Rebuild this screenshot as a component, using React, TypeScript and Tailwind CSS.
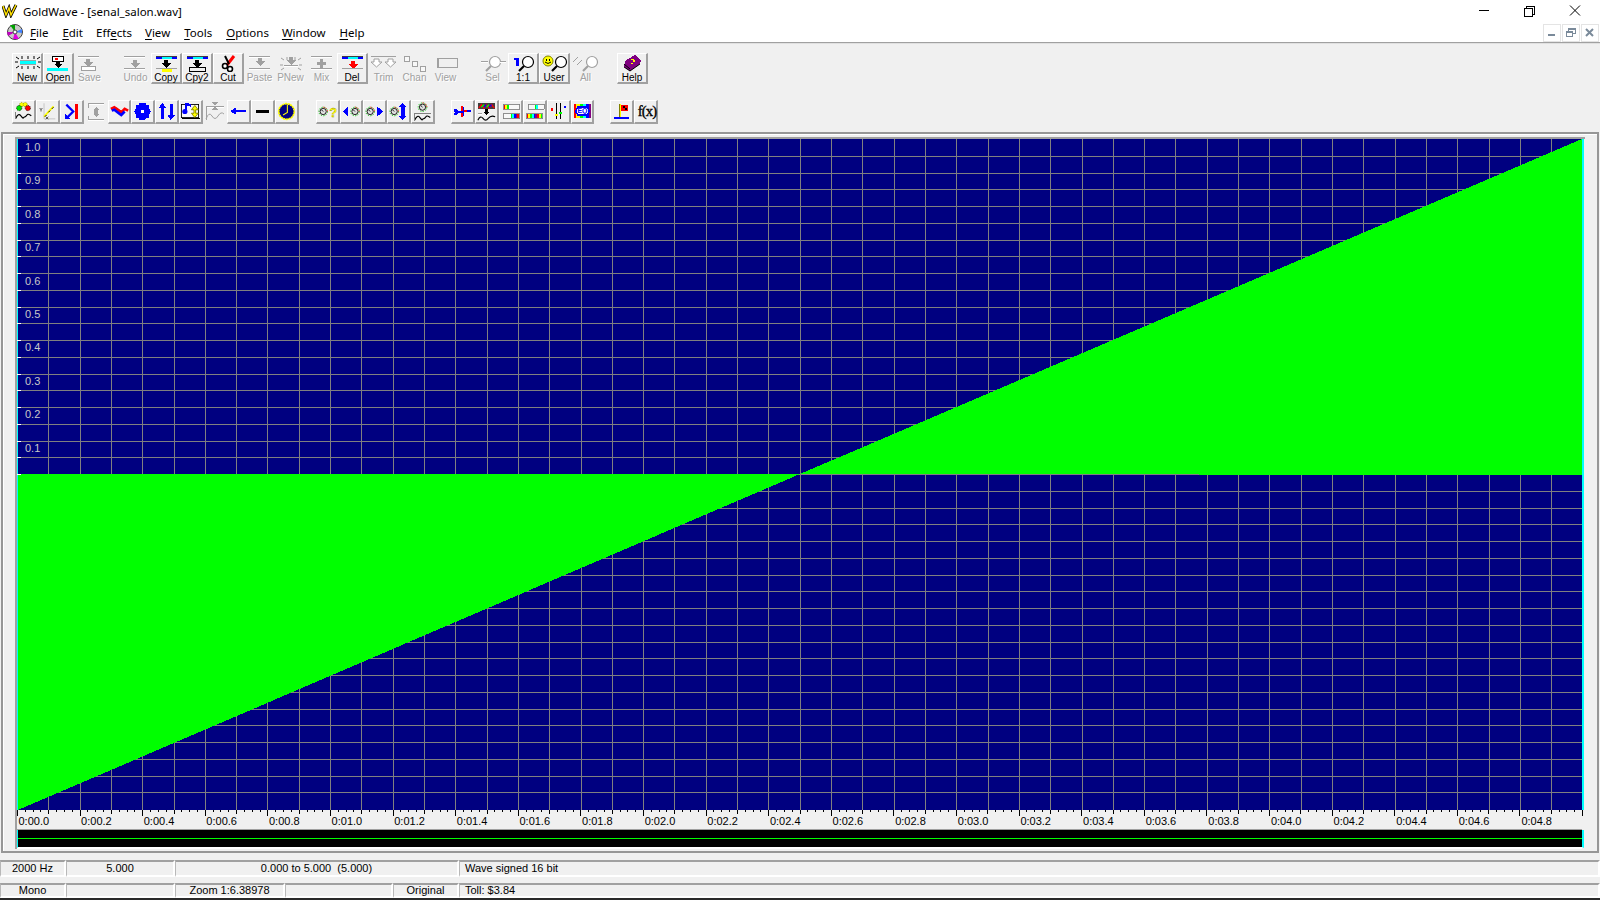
import React from "react";

const R = ({ x, y, w, h, f }: { x: number; y: number; w: number; h: number; f: string }) => (
  <rect x={x} y={y} width={w} height={h} fill={f} shapeRendering="crispEdges" />
);
const P = ({ d, f }: { d: string; f: string }) => <path d={d} fill={f} shapeRendering="crispEdges" />;
const L = ({ d, s = "#000", w = 1 }: { d: string; s?: string; w?: number }) => (
  <path d={d} fill="none" stroke={s} strokeWidth={w} />
);
const G = "#a0a0a0";
const W = "#ffffff";

const GLine = ({ x, y, w }: { x: number; y: number; w: number }) => (
  <>
    <R x={x} y={y} w={w} h={1} f={G} />
    <R x={x} y={y + 1} w={w} h={1} f={W} />
  </>
);
const Mag = ({ x, y, c = "#000" }: { x: number; y: number; c?: string }) => (
  <>
    <circle cx={x + 8} cy={y + 6} r={5.5} fill="#fff" stroke={c} strokeWidth={1.2} />
    <L d={`M${x + 4} ${y + 10} L${x - 1} ${y + 15}`} s={c} w={2.2} />
  </>
);
const ArrowDown = ({ x, y, c = "#000" }: { x: number; y: number; c?: string }) => (
  <P d={`M${x + 2} ${y}h4v3h3l-5 5l-5-5h3z`} f={c} />
);
const TopBar = ({ x = 4 }: { x?: number }) => (
  <>
    <R x={x} y={3} w={21} h={2} f="#0000ff" />
    <R x={x + 6} y={3} w={10} h={2} f="#00ffff" />
    <R x={x} y={2} w={21} h={1} f="#404040" />
  </>
);

const big: Record<string, React.ReactNode> = {
  New: (
    <>
      <L d="M3 3l3 2M9 2v3M15 2v3M21 2v3M27 3l-3 2M2 8h3M25 8h3M3 14l3-2M9 12v3M15 12v3M21 12v3M27 14l-3-2" />
      <R x={7} y={6} w={16} h={1} f={G} />
      <R x={7} y={7} w={16} h={3} f="#00ffff" />
      <R x={7} y={10} w={16} h={1} f={G} />
    </>
  ),
  Open: (
    <>
      <R x={8} y={2} w={12} h={6} f="#000" />
      <R x={9} y={3} w={10} h={4} f="#fff" />
      <R x={11} y={4} w={3} h={2} f="#ff0000" />
      <P d="M12 8h4v2h2l-4 4l-4-4h2z" f="#000" />
      <R x={3} y={14} w={21} h={3} f="#00ffff" />
    </>
  ),
  Save: (
    <>
      <GLine x={3} y={2} w={21} />
      <ArrowDown x={9} y={5} c={G} />
      <R x={6} y={12} w={15} h={5} f="#fff" />
      <path d="M6.5 12.5h14v4h-14z" fill="none" stroke={G} shapeRendering="crispEdges" />
    </>
  ),
  Undo: (
    <>
      <GLine x={3} y={2} w={21} />
      <ArrowDown x={10} y={6} c={G} />
      <GLine x={3} y={14} w={21} />
    </>
  ),
  Copy: (
    <>
      <TopBar />
      <ArrowDown x={10} y={6} />
      <R x={4} y={14} w={21} h={1} f={G} />
      <R x={10} y={15} w={10} h={3} f="#ffff00" />
    </>
  ),
  Cpy2: (
    <>
      <TopBar />
      <ArrowDown x={10} y={6} />
      <R x={6} y={13} w={17} h={5} f="#000" />
      <R x={7} y={14} w={15} h={3} f="#f0f0f0" />
    </>
  ),
  Cut: (
    <>
      <L d="M20 2L13 11" s="#ff0000" w={3} />
      <L d="M11 2L15 10" s="#000" w={2} />
      <circle cx={11} cy={12} r={2.5} fill="#fff" stroke="#000" strokeWidth={1.6} />
      <circle cx={16} cy={15} r={2.5} fill="#fff" stroke="#000" strokeWidth={1.6} />
    </>
  ),
  Paste: (
    <>
      <GLine x={4} y={2} w={21} />
      <ArrowDown x={11} y={4} c={G} />
      <GLine x={4} y={14} w={21} />
    </>
  ),
  PNew: (
    <>
      <L d="M5 4l3 2M11 3v3M19 3v3M25 4l-3 2M4 11h3M23 11h3M5 16l3-2M25 16l-3-2" s={G} />
      <ArrowDown x={11} y={3} c={G} />
      <GLine x={8} y={11} w={14} />
    </>
  ),
  Mix: (
    <>
      <GLine x={4} y={2} w={21} />
      <P d="M13 5h3v3h3v3h-3v3h-3v-3h-3v-3h3z" f={G} />
      <GLine x={4} y={14} w={21} />
    </>
  ),
  Del: (
    <>
      <TopBar />
      <P d="M13 7h4v3h3l-5 5l-5-5h3z" f="#ff0000" />
      <R x={4} y={14} w={21} h={1} f={G} />
    </>
  ),
  Trim: (
    <>
      <R x={2} y={2} w={25} h={1} f={G} />
      <path d="M5 5h5v3h3l-5.5 5L2 8h3zM19 5h5v3h3l-5.5 5L16 8h3z" fill="#fff" stroke={G} />
    </>
  ),
  Chan: (
    <>
      <path d="M4.5 2.5h5v5h-5zM12.5 7.5h5v5h-5zM20.5 12.5h5v5h-5z" fill="#f8f8f8" stroke={G} shapeRendering="crispEdges" />
    </>
  ),
  View: (
    <>
      <path d="M6.5 4.5h20v9h-20z" fill="#f0f0f0" stroke={G} shapeRendering="crispEdges" />
      <R x={6} y={4} w={2} h={10} f={G} />
    </>
  ),
  Sel: (
    <>
      <Mag x={9} y={2} c={G} />
      <GLine x={3} y={7} w={7} />
      <GLine x={22} y={7} w={6} />
    </>
  ),
  "1:1": (
    <>
      <R x={7} y={4} w={3} h={8} f="#0000ff" />
      <R x={5} y={4} w={3} h={2} f="#0000ff" />
      <Mag x={11} y={2} />
    </>
  ),
  User: (
    <>
      <circle cx={8} cy={7} r={5} fill="#ffff00" stroke="#808000" />
      <R x={6} y={5} w={1} h={2} f="#000" />
      <R x={9} y={5} w={1} h={2} f="#000" />
      <L d="M5 8q3 3 6 0" />
      <Mag x={13} y={2} />
    </>
  ),
  All: (
    <>
      <L d="M2 8l5-5M6 11l5-5" s={G} />
      <Mag x={13} y={2} c={G} />
    </>
  ),
  Help: (
    <>
      <P d="M7 7L17 1l6 5l-1 4l-10 7l-6-4z" f="#800080" />
      <L d="M6 13l6 4l10-7M6 10l6 5" s="#000" />
      <R x={13} y={5} w={3} h={1} f="#ffff00" />
      <R x={15} y={6} w={2} h={2} f="#ffff00" />
      <R x={13} y={9} w={2} h={1} f="#ffff00" />
    </>
  ),
};

const Knob = ({ x, y }: { x: number; y: number }) => (
  <>
    <circle cx={x + 5} cy={y + 5} r={5} fill="none" stroke="#00c000" strokeWidth={1} strokeDasharray="1.5 1.5" />
    <path d={`M${x + 5} ${y} a5 5 0 0 1 5 5`} fill="none" stroke="#ff0000" strokeDasharray="1.5 1.5" />
    <circle cx={x + 5} cy={y + 5} r={3.6} fill="#e0e0e0" stroke="#000" />
    <L d={`M${x + 5} ${y + 5}l-2-2`} />
  </>
);
const SmallWave = ({ y = 14 }: { y?: number }) => (
  <>
    <R x={1} y={y - 3} w={20} h={1} f="#808080" />
    <L d={`M2 ${y + 5}q3-7 6-3t3 2q3-1 4-3t5 1`} w={1.3} />
    <R x={1} y={y - 3} w={1} h={9} f="#808080" />
  </>
);
const rainbow = ["#ff0000", "#ffff00", "#00ff00", "#00ffff", "#0000ff", "#800080"];
const Bars = ({ x, y, h, n, from = 0 }: { x: number; y: number; h: number; n: number; from?: number }) => (
  <>
    {Array.from({ length: n }, (_, i) => (
      <R key={i} x={x + i * 2} y={y} w={2} h={h} f={rainbow[(i + from) % 6]} />
    ))}
  </>
);

const small: React.ReactNode[] = [
  <>
    <circle cx={9} cy={3} r={2.5} fill="#ffff00" stroke="#808000" strokeDasharray="1 1" />
    <circle cx={13} cy={3} r={2.5} fill="#ffff00" stroke="#808000" strokeDasharray="1 1" />
    <circle cx={6} cy={7} r={3} fill="#00e000" stroke="#000" strokeDasharray="1 1" />
    <circle cx={16} cy={7} r={3} fill="#ff0000" stroke="#000" strokeDasharray="1 1" />
    <SmallWave />
  </>,
  <>
    <L d="M7 1.5v18M7 19.5h13" s="#c0c0c0" />
    <L d="M7 17L18 5" s="#ffff00" w={2} />
    <L d="M8 17l2-2M12 12l2-2M16 8l2-2" />
    <L d="M2 7l1.5 2L5 7M3.5 9v2M9 17l3 3M12 17l-3 3" s="#404040" />
  </>,
  <>
    <R x={15} y={2} w={3} h={18} f="#ff0000" />
    <L d="M5 3l8 8l-8 8" s="#0000ff" w={2.6} />
    <P d="M3 13v7h7z" f="#0000ff" />
  </>,
  <>
    <GLine x={3} y={2} w={16} />
    <R x={3} y={2} w={1} h={5} f={G} />
    <P d="M11 6l3 3h-6zM11 16l3-3h-6z" f={G} />
    <R x={9} y={9} w={4} h={4} f={G} />
    <GLine x={3} y={18} w={16} />
    <R x={3} y={15} w={1} h={4} f={G} />
  </>,
  <>
    <L d="M1 8l4-2l4 3l4 3l4-4l4 2" s="#ff0000" w={3} />
    <L d="M2 10l3-1l4 3l4 3l4-4" s="#0000ff" w={3} />
    <L d="M7 7l4 3l3 1" s="#ff0000" w={2} />
  </>,
  <>
    <P d="M8 1h6l2 3h3l-1 3l3 4l-3 4l1 3h-3l-2 3H8l-2-3H3l1-3l-3-4l3-4l-1-3h3z" f="#0000ff" />
    <R x={9} y={9} w={4} h={4} f="#fff" />
  </>,
  <>
    <P d="M6 1l5 6H8v13H5V7H2z" f="#0000ff" />
    <P d="M16 21l5-6h-3V2h-3v13h-3z" f="#0000ff" />
  </>,
  <>
    <path d="M.5 2.5h20v16H.5z" fill="#f8f8f8" stroke="#000" shapeRendering="crispEdges" />
    <R x={1} y={18} w={21} h={2} f="#000" />
    <P d="M5 1h2v10h-2z" f="#0000ff" />
    <P d="M7 1l5 2v3l-5-2z" f="#0000ff" />
    <circle cx={4.5} cy={11} r={3} fill="#0000ff" />
    <P d="M16 4l4 5h-3v4h3l-4 5l-4-5h3V9h-3z" f="#ffff00" />
    <L d="M16 4l4 5h-3v4h3l-4 5l-4-5h3V9h-3z" s="#808000" />
  </>,
  <>
    <GLine x={2} y={5} w={18} />
    <P d="M8 1h6l-3 4zM8 9h6l-3-4z" f={G} />
    <L d="M2 18q3-8 6-3t6 0t6-2" s={G} />
    <R x={2} y={6} w={1} h={13} f={G} />
  </>,
  <>
    <R x={6} y={9} w={14} h={3} f="#0000ff" />
    <P d="M1 10.5l7-4v8z" f="#0000ff" />
  </>,
  <R x={3} y={9} w={16} h={4} f="#000" />,
  <>
    <circle cx={11} cy={11} r={9} fill="#000080" stroke="#ffff00" strokeWidth={2} strokeDasharray="2.5 .6" />
    <L d="M12 3v9l-5 3" s="#ffff00" w={1.2} />
  </>,
  <>
    <Knob x={1} y={6} />
    <text x={13} y={17} fontSize={15} fontWeight={700} fill="#ffff00" stroke="#808000" strokeWidth={0.3} fontFamily="Liberation Sans, sans-serif">?</text>
  </>,
  <>
    <P d="M1 11l6-5.5v11z" f="#0000ff" />
    <Knob x={10} y={6} />
  </>,
  <>
    <Knob x={1} y={6} />
    <P d="M14 5l7 6l-7 6z" f="#0000ff" />
  </>,
  <>
    <Knob x={1} y={6} />
    <P d="M16 1l5 5h-3v10h3l-5 5l-5-5h3V6h-3z" f="#0000ff" />
  </>,
  <>
    <Knob x={6} y={1} />
    <SmallWave y={16} />
  </>,
  <>
    <P d="M1 8h3l2 2h3V5h3l1 4h8v3h-8l-1 5H9v-4H6l-2 2H1l1-3z" f="#0000ff" />
    <P d="M9 5h3v5H9zM9 13h3v4H9z" f="#ff0000" />
    <R x={13} y={9} w={3} h={3} f="#ff0000" />
  </>,
  <>
    <R x={1} y={1} w={20} h={7} f="#404040" />
    <L d="M2 7l3-4l3 4l3-4l3 4l3-4l3 4" s="#ff0000" w={1.5} />
    <L d="M5 6l3-3M11 6l3-3" s="#00ff00" w={1.5} />
    <L d="M8 6l3-3M14 6l3-3" s="#0000ff" w={1.5} />
    <P d="M9 8h4v3h2l-4 4l-4-4h2z" f="#000" />
    <GLine x={1} y={13} w={5} />
    <L d="M1 21q3-6 6-2t6 0t8-2" w={1.3} />
  </>,
  <>
    <path d="M2.5 2.5h19v6h-19z" fill="#f8f8f8" stroke="#808080" shapeRendering="crispEdges" />
    <Bars x={3} y={3} h={5} n={3} />
    <path d="M2.5 13.5h19v6h-19z" fill="#f8f8f8" stroke="#808080" shapeRendering="crispEdges" />
    <Bars x={11} y={14} h={5} n={5} from={2} />
  </>,
  <>
    <path d="M3.5 2.5h19v6h-19z" fill="#f8f8f8" stroke="#808080" shapeRendering="crispEdges" />
    <Bars x={11} y={3} h={5} n={2} from={2} />
    <path d="M1.5 13.5h19v6h-19z" fill="#f8f8f8" stroke="#808080" shapeRendering="crispEdges" />
    <Bars x={2} y={14} h={5} n={9} />
  </>,
  <>
    <R x={3} y={1} w={1} h={19} f="#000" />
    <R x={8} y={1} w={1} h={19} f="#000" />
    <R x={13} y={1} w={1} h={19} f="#000" />
    <R x={18} y={1} w={1} h={19} f="#000" />
    <R x={2} y={7} w={3} h={3} f="#ff0000" />
    <R x={7} y={14} w={3} h={2} f="#ffff00" />
    <R x={12} y={11} w={3} h={3} f="#00ff00" />
    <R x={17} y={5} w={3} h={2} f="#0000ff" />
  </>,
  <>
    <R x={1} y={2} w={3} h={17} f="#ff0000" />
    <R x={4} y={2} w={4} h={17} f="#ffff00" />
    <R x={8} y={2} w={4} h={17} f="#00ff00" />
    <R x={12} y={2} w={3} h={17} f="#00ffff" />
    <R x={15} y={2} w={3} h={17} f="#0000ff" />
    <R x={18} y={2} w={3} h={17} f="#800080" />
    <P d="M5 5h12l3 5.5l-3 5.5H5l-3-5.5z" f="#0000ff" />
    <P d="M6 7h10l2 3.5l-2 3.5H6l-2-3.5z" f="#fff" />
    <text x={11} y={13} fontSize={8} fontWeight={700} textAnchor="middle" fill="#0000ff" fontFamily="Liberation Sans, sans-serif">EQ</text>
  </>,
  <>
    <R x={2} y={17} w={18} h={3} f="#0000ff" />
    <R x={8} y={2} w={2} h={15} f="#ffff00" />
    <R x={8} y={2} w={1} h={15} f="#808000" />
    <R x={10} y={3} w={9} h={7} f="#ff0000" />
    <R x={13} y={5} w={2} h={2} f="#000" />
    <R x={15} y={7} w={2} h={2} f="#000" />
  </>,
  <>
    <text x={2} y={16} fontSize={17} fontWeight={400} stroke="#000" strokeWidth={0.4} fill="#000" letterSpacing={-1} fontFamily="Liberation Serif, serif">f(x)</text>
  </>,
];

const tools1: (string | number)[] = ["New", "Open", "Save", 15, "Undo", "Copy", "Cpy2", "Cut", "Paste", "PNew", "Mix", "Del", "Trim", "Chan", "View", 16, "Sel", "1:1", "User", "All", 16, "Help"];
const disabled = new Set(["Save", "Undo", "Paste", "PNew", "Mix", "Trim", "Chan", "View", "Sel", "All"]);
const tools2: number[] = [0, 1, 2, 3, 4, 5, 6, 7, 8, 9, 10, 11, -17, 12, 13, 14, 15, 16, -16, 17, 18, 19, 20, 21, 22, -16, 23, 24];

const raised = "border-t border-l border-t-white border-l-white border-b-2 border-r-2 border-b-[#a0a0a0] border-r-[#a0a0a0]";

const BigBtn = ({ name }: { name: string }) => {
  const off = disabled.has(name);
  return (
    <div className={`w-[31px] h-[31px] flex flex-col items-center shrink-0 box-border ${off ? "" : raised}`}>
      <svg width="29" height="18" viewBox="0 0 29 18" className={`shrink-0 ${off ? "mt-[1px]" : ""}`}>{big[name]}</svg>
      <span className={`text-[10px] leading-[11px] ${off ? "text-[#a0a0a0] [text-shadow:1px_1px_0_#fff]" : "text-black"}`}>{name}</span>
    </div>
  );
};
const SmallBtn = ({ i }: { i: number }) => {
  const flat = i === 3 || i === 8;
  return (
    <div className={`w-[23.9px] h-[24px] shrink-0 flex items-center justify-center box-border ${flat ? "" : raised}`}>
      <svg width={flat ? 22 : 19} height={flat ? 22 : 19} viewBox="0 0 22 22" className="shrink-0 overflow-visible">{small[i]}</svg>
    </div>
  );
};

const Menu = ({ t, u, x }: { t: string; u: number; x: string }) => (
  <span className={x}>
    {t.slice(0, u)}
    <span className="underline underline-offset-2">{t[u]}</span>
    {t.slice(u + 1)}
  </span>
);

const GRID = "#808080";
const vLines = Array.from({ length: 49 }, (_, i) => Math.round(31.3 + 31.31 * i));
const hLines = Array.from({ length: 39 }, (_, j) => Math.round(16.75 * (j + 1)));
const yLabels = ["1.0", "0.9", "0.8", "0.7", "0.6", "0.5", "0.4", "0.3", "0.2", "0.1"];
const tLabels = Array.from({ length: 25 }, (_, i) => {
  const v = i * 2;
  const s = Math.floor(v / 10);
  return { x: i * 62.62, t: `0:0${s}.${v % 10}` };
});

const Cell = ({ w, c, children }: { w: string; c?: string; children?: React.ReactNode }) => (
  <div className={`${w} ${c ?? "justify-center"} h-full shrink-0 flex items-center border-t-2 border-l border-t-[#a0a0a0] border-l-[#b8b8b8] border-b-2 border-r-2 border-b-white border-r-white whitespace-nowrap text-[11px] text-black`}>
    {children}
  </div>
);

export default function App() {
  return (
    <div className="w-[1600px] h-[900px] overflow-hidden flex flex-col bg-[#f0f0f0] font-['Liberation_Sans',Arial,sans-serif] select-none">
      {/* Title bar */}
      <div className="h-[22px] bg-white flex items-center shrink-0">
        <svg width="16" height="14" viewBox="0 0 16 14" className="ml-[2px] mt-[-1px]">
          <path d="M1 2l3 9l3-7l2 7l5-10" fill="none" stroke="#000" strokeWidth="3" />
          <path d="M1 2l3 9l3-7l2 7l5-10" fill="none" stroke="#ffe000" strokeWidth="1.5" />
        </svg>
        <span className="ml-[5px] mt-[2px] text-[11.5px] text-black font-['Noto_Sans',sans-serif]">GoldWave - [senal_salon.wav]</span>
        <div className="ml-auto flex items-center">
          <svg width="46" height="22" viewBox="0 0 46 22"><rect x="11" y="10" width="10" height="1" fill="#000" /></svg>
          <svg width="45" height="22" viewBox="0 0 45 22"><path d="M10.5 8.5h8v8h-8zM12.5 8.5v-2h8v8h-2" fill="none" stroke="#000" shapeRendering="crispEdges" /></svg>
          <svg width="41" height="22" viewBox="0 0 41 22"><path d="M11 5.5l10 10M21 5.5l-10 10" stroke="#000" fill="none" /></svg>
        </div>
      </div>
      {/* Menu */}
      <div className="h-[21px] bg-white flex items-center shrink-0 text-[11.5px] text-black font-['Noto_Sans',sans-serif] border-b border-b-[#a0a0a0]">
        <svg width="16" height="16" viewBox="0 0 16 16" className="ml-[7px]">
          <circle cx="8" cy="8" r="7.5" fill="#c8c8c8" stroke="#404040" />
          <path d="M8 8L3 1h5z" fill="#00a000" />
          <path d="M8 8L1 12l-1-4z" fill="#c000c0" />
          <path d="M8 8l4 7h-6z" fill="#e000e0" />
          <path d="M8 8l7-3v4z" fill="#4080ff" />
          <circle cx="8" cy="8" r="2" fill="#fff" stroke="#404040" />
        </svg>
        <div className="flex items-center mt-[2px]">
          <Menu t="File" u={0} x="ml-[7px]" />
          <Menu t="Edit" u={0} x="ml-[14px]" />
          <Menu t="Effects" u={3} x="ml-[13px]" />
          <Menu t="View" u={0} x="ml-[13px]" />
          <Menu t="Tools" u={0} x="ml-[14px]" />
          <Menu t="Options" u={0} x="ml-[14px]" />
          <Menu t="Window" u={0} x="ml-[13px]" />
          <Menu t="Help" u={0} x="ml-[14px]" />
        </div>
        <div className="ml-auto flex gap-[1px] pr-[1px] h-[18px] self-start mt-[2px]">
          {["min", "rest", "close"].map((k) => (
            <div key={k} className="w-[18px] border border-[#e4e4e4] flex items-center justify-center">
              <svg width="12" height="12" viewBox="0 0 12 12">
                {k === "min" && <rect x="2" y="7" width="7" height="2" fill="#7a8a9a" />}
                {k === "rest" && <path d="M1.5 4.5h6v5h-6zM3.5 4V1.5h7v5H8M1 5h7M3 2h8" fill="none" stroke="#7a8a9a" shapeRendering="crispEdges" />}
                {k === "close" && <path d="M2 2l7 7M9 2l-7 7" stroke="#7a8a9a" strokeWidth="2" fill="none" />}
              </svg>
            </div>
          ))}
        </div>
      </div>
      {/* Toolbars */}
      <div className="h-[89px] shrink-0 flex flex-col border-t border-t-[#e0e0e0] pl-[12px] pt-[9px]">
        <div className="flex h-[31px]">
          {tools1.map((t, i) =>
            typeof t === "number" ? <div key={i} className={t === 15 ? "w-[15px] shrink-0" : "w-[16px] shrink-0"} /> : <BigBtn key={i} name={t} />
          )}
        </div>
        <div className="flex h-[24px] mt-[16px]">
          {tools2.map((t, i) =>
            t < 0 ? <div key={i} className={t === -17 ? "w-[17px] shrink-0" : "w-[16px] shrink-0"} /> : <SmallBtn key={i} i={t} />
          )}
        </div>
      </div>
      {/* MDI frame */}
      <div className="h-[721px] shrink-0 mx-[1px] border-2 border-[#969696] shadow-[inset_1px_1px_0_#fff] pl-[12px] pr-[9px] pt-[3px] flex flex-col">
        <div className="flex flex-col border-t-2 border-l-2 border-[#a0a0a0] w-[1570px]">
          <svg width="1568" height="671" viewBox="0 0 1568 671" className="shrink-0 block">
            <rect x="0" y="0" width="1565" height="671" fill="#000080" shapeRendering="crispEdges" />
            {vLines.map((x) => <rect key={x} x={x} y="0" width="1" height="671" fill={GRID} shapeRendering="crispEdges" />)}
            {hLines.map((y) => <rect key={y} x="0" y={y} width="1565" height="1" fill={GRID} shapeRendering="crispEdges" />)}
            <polygon points="1,335 783,335 1,671" fill="#00ff00" shapeRendering="crispEdges" />
            <polygon points="783,335 1565,0 1565,336" fill="#00ff00" shapeRendering="crispEdges" />
            <rect x="0" y="0" width="1" height="671" fill="#00ffff" shapeRendering="crispEdges" />
            <rect x="1565" y="0" width="2" height="671" fill="#00ffff" shapeRendering="crispEdges" />
            {hLines.slice(0, 20).map((y) => <rect key={y} x="0" y={y} width="4" height="1" fill="#ffffff" shapeRendering="crispEdges" />)}
            {yLabels.map((t, i) => (
              <text key={t} x="8" y={12 + i * 33.4} fontSize="11" fill="#c8c8c8" fontFamily="Liberation Sans, sans-serif">{t}</text>
            ))}
          </svg>
          <svg width="1568" height="19" viewBox="0 0 1568 19" className="shrink-0 block">
            {Array.from({ length: 201 }, (_, i) => (
              <rect key={i} x={Math.round(i * 7.825)} y="0" width="1" height={i % 8 === 0 ? 6 : i % 4 === 0 ? 4 : 2} fill="#000" shapeRendering="crispEdges" />
            ))}
            {tLabels.map((l) => (
              <text key={l.t} x={l.x + 1.5} y="15" fontSize="11" fill="#000" fontFamily="Liberation Sans, sans-serif">{l.t}</text>
            ))}
          </svg>
          <div className="w-[1565px] h-[1px] bg-[#a0a0a0] shrink-0" />
          <div className="w-[1567px] h-[18px] shrink-0 bg-black flex items-center border-b border-b-white border-l border-l-[#00ffff] border-r-2 border-r-[#00ffff]">
            <div className="w-full h-[1px] bg-[#00ff00]" />
          </div>
          <div className="w-[1565px] h-[1px] bg-white shrink-0" />
        </div>
      </div>
      {/* Status */}
      <div className="flex h-[17px] shrink-0 mt-[7px]">
        <Cell w="w-[66px]">2000 Hz</Cell>
        <Cell w="w-[109px]">5.000</Cell>
        <Cell w="w-[284px]">0.000 to 5.000&nbsp; (5.000)</Cell>
        <Cell w="w-[1141px]" c="justify-start pl-[5px]">Wave signed 16 bit</Cell>
      </div>
      <div className="flex h-[15px] shrink-0 mt-[6px]">
        <Cell w="w-[66px]">Mono</Cell>
        <Cell w="w-[109px]" />
        <Cell w="w-[110px]">Zoom 1:6.38978</Cell>
        <Cell w="w-[108px]" />
        <Cell w="w-[66px]">Original</Cell>
        <Cell w="w-[1141px]" c="justify-start pl-[5px]">Toll: $3.84</Cell>
      </div>
      <div className="h-[2px] bg-[#2a2a2a] shrink-0" />
    </div>
  );
}
